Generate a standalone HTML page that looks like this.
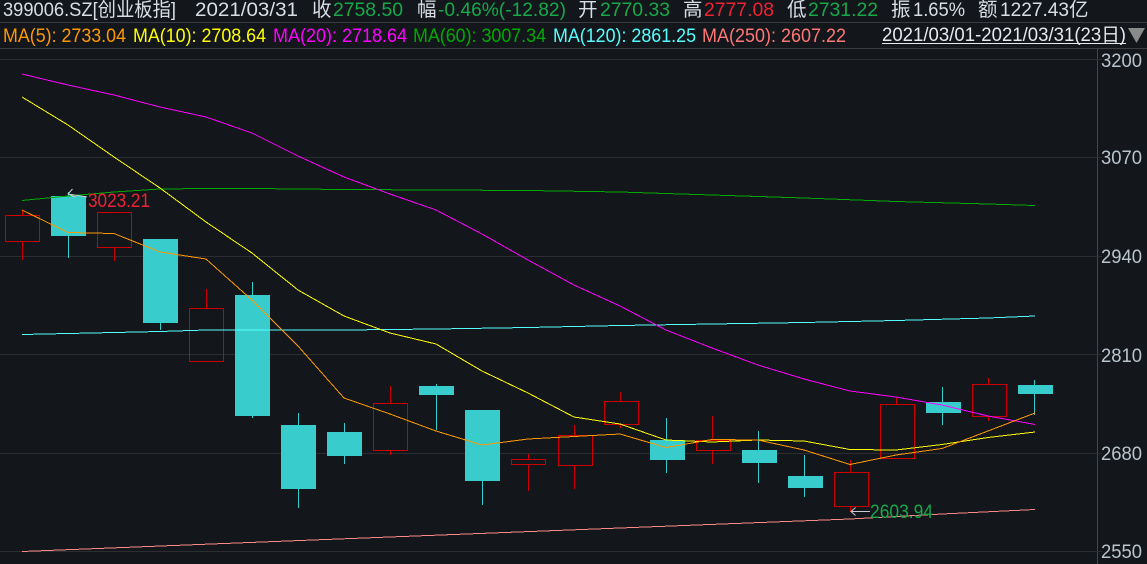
<!DOCTYPE html>
<html><head><meta charset="utf-8"><style>
html,body{margin:0;padding:0;background:#13171c;width:1147px;height:564px;overflow:hidden}
svg{display:block}
text{font-family:"Liberation Sans","Noto Sans CJK SC",sans-serif;white-space:pre}
.r1 text{font-size:19.5px}
.r2 text{font-size:19px}
.ax text{font-size:19px;fill:#b9c5cd}
.w{fill:#d9dee6}.g{fill:#17a84a}.d{fill:#ee2233}
.grid path{stroke:#2b2d30;stroke-width:1;fill:none}
.cy{fill:#38cccc}
.cw{stroke:#38cccc;stroke-width:1;fill:none}
.rd{stroke:#cc0000;stroke-width:1;fill:none}
.ma{fill:none;stroke-width:1}
</style></head><body>
<svg width="1147" height="564" viewBox="0 0 1147 564" xmlns="http://www.w3.org/2000/svg">
<rect width="1147" height="564" fill="#13171c"/>
<g shape-rendering="crispEdges">
<path d="M0 22.5H1147M0 48.5H1147" stroke="#3a3c3f" stroke-width="1"/>
<path d="M1097.5 49V564" stroke="#44474a" stroke-width="1"/>
<g class="grid"><path d="M0 59.5H1102M0 157.5H1102M0 256.5H1102M0 354.5H1102M0 453.5H1102M0 551.5H1102"/></g>
</g>
<g class="r1">
<text class="w" x="3" y="16" textLength="173" lengthAdjust="spacingAndGlyphs">399006.SZ[创业板指]</text>
<text class="w" x="195" y="16" textLength="103" lengthAdjust="spacingAndGlyphs">2021/03/31</text>
<text class="w" x="312" y="16">收</text>
<text class="g" x="333" y="16" textLength="70" lengthAdjust="spacingAndGlyphs">2758.50</text>
<text class="w" x="417" y="16">幅</text>
<text class="g" x="438" y="16" textLength="128" lengthAdjust="spacingAndGlyphs">-0.46%(-12.82)</text>
<text class="w" x="578" y="16">开</text>
<text class="g" x="600" y="16" textLength="70" lengthAdjust="spacingAndGlyphs">2770.33</text>
<text class="w" x="683" y="16">高</text>
<text class="d" x="704" y="16" textLength="70" lengthAdjust="spacingAndGlyphs">2777.08</text>
<text class="w" x="787" y="16">低</text>
<text class="g" x="808" y="16" textLength="70" lengthAdjust="spacingAndGlyphs">2731.22</text>
<text class="w" x="891" y="16">振</text>
<text class="w" x="913" y="16" textLength="52" lengthAdjust="spacingAndGlyphs">1.65%</text>
<text class="w" x="978" y="16">额</text>
<text class="w" x="1000" y="16" textLength="69" lengthAdjust="spacingAndGlyphs">1227.43</text>
<text class="w" x="1069" y="16">亿</text>
</g>
<g class="r2">
<text x="3" y="42" fill="#ff9900" textLength="123" lengthAdjust="spacingAndGlyphs">MA(5): 2733.04</text>
<text x="133" y="42" fill="#ffff00" textLength="133" lengthAdjust="spacingAndGlyphs">MA(10): 2708.64</text>
<text x="273" y="42" fill="#ff00ff" textLength="134" lengthAdjust="spacingAndGlyphs">MA(20): 2718.64</text>
<text x="413" y="42" fill="#00aa00" textLength="133" lengthAdjust="spacingAndGlyphs">MA(60): 3007.34</text>
<text x="553" y="42" fill="#55ffff" textLength="143" lengthAdjust="spacingAndGlyphs">MA(120): 2861.25</text>
<text x="702" y="42" fill="#ff7777" textLength="144" lengthAdjust="spacingAndGlyphs">MA(250): 2607.22</text>
<text x="882" y="41" fill="#e6e9ee" textLength="244" lengthAdjust="spacingAndGlyphs">2021/03/01-2021/03/31(23日)</text>
</g>
<rect x="882" y="43" width="244" height="1" fill="#e6e9ee"/>
<polygon points="1128,28 1145,28 1136.5,43" fill="#8a8a8a"/>
<g class="ax">
<text x="1101" y="67" textLength="41" lengthAdjust="spacingAndGlyphs">3200</text>
<text x="1101" y="164" textLength="41" lengthAdjust="spacingAndGlyphs">3070</text>
<text x="1101" y="263" textLength="41" lengthAdjust="spacingAndGlyphs">2940</text>
<text x="1101" y="362" textLength="41" lengthAdjust="spacingAndGlyphs">2810</text>
<text x="1101" y="460" textLength="41" lengthAdjust="spacingAndGlyphs">2680</text>
<text x="1101" y="558" textLength="41" lengthAdjust="spacingAndGlyphs">2550</text>
</g>
<g shape-rendering="crispEdges">
<path class="rd" d="M22.5 210V215M22.5 241V260M114.5 248V261M206.5 289V308M390.5 386V403M390.5 451V455M528.5 454V459M528.5 465V491M574.5 425V435M574.5 466V489M620.5 392V401M620.5 425V428M712.5 416V440M712.5 451V464M850.5 460V472M850.5 507V512M896.5 398V404M988.5 378V384M988.5 417V421"/>
<rect class="rd" x="5.5" y="215.5" width="34" height="26"/>
<rect class="rd" x="97.5" y="212.5" width="34" height="35"/>
<rect class="rd" x="189.5" y="308.5" width="34" height="53"/>
<rect class="rd" x="373.5" y="403.5" width="34" height="47"/>
<rect class="rd" x="511.5" y="459.5" width="34" height="5"/>
<rect class="rd" x="558.5" y="435.5" width="34" height="30"/>
<rect class="rd" x="604.5" y="401.5" width="34" height="23"/>
<rect class="rd" x="696.5" y="440.5" width="34" height="10"/>
<rect class="rd" x="834.5" y="472.5" width="34" height="34"/>
<rect class="rd" x="880.5" y="404.5" width="34" height="54"/>
<rect class="rd" x="972.5" y="384.5" width="34" height="32"/>
<path class="cw" d="M68.5 192V258M160.5 323V330M252.5 282V418M298.5 413V508M344.5 423V464M436.5 384V430M482.5 481V505M666.5 418V473M758.5 431V483M804.5 455V497M942.5 387V425M1034.5 380V415"/>
<rect class="cy" x="51" y="196" width="35" height="40"/>
<rect class="cy" x="143" y="239" width="35" height="84"/>
<rect class="cy" x="235" y="295" width="35" height="121"/>
<rect class="cy" x="281" y="425" width="35" height="64"/>
<rect class="cy" x="327" y="432" width="35" height="24"/>
<rect class="cy" x="419" y="386" width="35" height="9"/>
<rect class="cy" x="465" y="410" width="35" height="71"/>
<rect class="cy" x="650" y="440" width="35" height="20"/>
<rect class="cy" x="742" y="450" width="35" height="13"/>
<rect class="cy" x="788" y="476" width="35" height="12"/>
<rect class="cy" x="926" y="402" width="35" height="11"/>
<rect class="cy" x="1018" y="385" width="35" height="9"/>
<polyline class="ma" stroke="#00aa00" points="22,200.5 68,196 114,192 160,189 206,188.5 252,188.5 344,189.5 436,190 528,190.5 620,192 712,195 804,198 896,201.5 988,204 1035,205.5"/>
<polyline class="ma" stroke="#55ffff" points="22,334.5 68,333.5 114,332.5 160,331.5 206,330 252,330 344,330 436,329 528,327.5 620,325.5 712,324 804,322.5 896,320.5 988,318 1035,316"/>
<polyline class="ma" stroke="#ff8888" points="22,551.5 300,540.5 587,529.3 850,519 942,514 1035,509.5"/>
<polyline class="ma" stroke="#ff00ff" points="22,74 68,85 114,95 160,107 206,117 252,133 298,156 344,177 390,194 436,210 482,234 528,260 574,285 620,306 666,330 712,348 758,365 804,379 850,391 896,397 942,405 988,416 1035,424.5"/>
<polyline class="ma" stroke="#ffff00" points="22,97 68,125 114,157 160,188 206,222 252,253 298,290 344,316 390,333 436,344 482,371 528,393 574,417 620,424 666,440 712,442 758,440 804,441 850,449.5 896,450 942,444.5 988,437.5 1035,432"/>
<polyline class="ma" stroke="#ff9900" points="22,210 68,232.5 114,233.5 160,252 206,259 252,300 298,346 344,398 390,414 436,431 482,445 528,439 574,436.5 620,434 666,447.5 712,439.5 758,440 804,450 850,464.5 896,455 942,448.5 988,431 1035,413"/>
</g>
<path d="M87 197L68 194M72.5 189L68 194L75 197" fill="none" stroke="#c8ccd0" stroke-width="1"/>
<text x="88" y="207" fill="#ee2233" font-size="19.5" textLength="62" lengthAdjust="spacingAndGlyphs">3023.21</text>
<path d="M870 511.5H851M855.5 507.5L851 511.5L855.5 515.5" fill="none" stroke="#c8ccd0" stroke-width="1"/>
<text x="870" y="518" fill="#17a84a" font-size="19.5" textLength="63" lengthAdjust="spacingAndGlyphs">2603.94</text>
</svg>
</body></html>
